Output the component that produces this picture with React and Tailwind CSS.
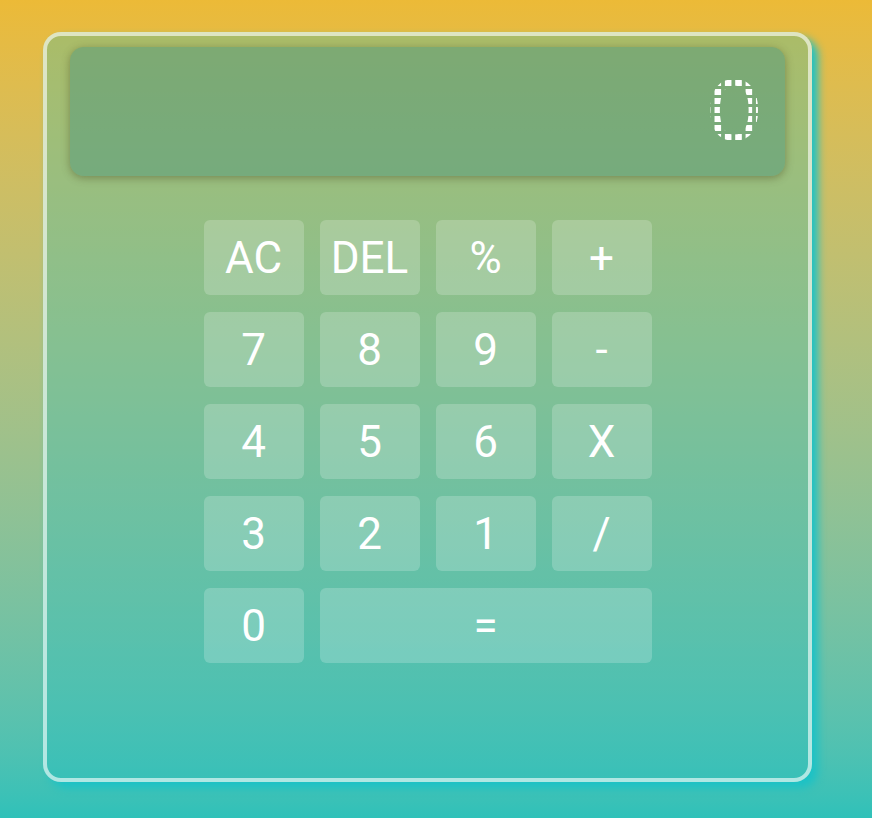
const keys = [
  { label: 'AC' },
  { label: 'DEL' },
  { label: '%' },
  { label: '+' },
  { label: '7' },
  { label: '8' },
  { label: '9' },
  { label: '-' },
  { label: '4' },
  { label: '5' },
  { label: '6' },
  { label: 'X' },
  { label: '3' },
  { label: '2' },
  { label: '1' },
  { label: '/' },
  { label: '0' },
  { label: '=', wide: true },
];

function Key({ label, wide }) {
  return (
    <button
      type="button"
      className={
        'flex h-[75px] items-center justify-center rounded-md bg-white/20 text-[44px] leading-none text-white ' +
        (wide ? 'col-span-3' : '')
      }
    >
      {label}
    </button>
  );
}

// dot-matrix look: the digit is real text, cut into squares on a 9px grid
function Display({ value }) {
  return (
    <div className="flex h-[129px] items-center justify-end rounded-[14px] bg-[rgba(82,152,124,0.5)] pr-[21px] shadow-[0_2px_8px_rgba(70,70,30,0.45)]">
      <span className="inline-block origin-right scale-x-[1.15] font-['DejaVu_Sans',sans-serif] text-[82px] leading-none text-white [mask-image:linear-gradient(90deg,#000_6px,transparent_6px),linear-gradient(#000_6px,transparent_6px)] [mask-size:9px_9px] [mask-composite:intersect]">
        {value}
      </span>
    </div>
  );
}

export default function App() {
  return (
    <div className="min-h-screen w-full bg-linear-to-b from-[#ecba37] to-[#2fc1b9] pl-[43px] pt-[32px] font-['Roboto',sans-serif]">
      <div className="h-[750px] w-[769px] rounded-[18px] border-4 border-white/60 bg-[#20c0c0]/30 px-[23px] pt-[11px] shadow-[6px_6px_8px_#1cc2c6]">
        <Display value="0" />
        <div className="mx-auto mt-[44px] grid w-[448px] grid-cols-4 gap-x-4 gap-y-[17px]">
          {keys.map((k) => (
            <Key key={k.label} label={k.label} wide={k.wide} />
          ))}
        </div>
      </div>
    </div>
  );
}
